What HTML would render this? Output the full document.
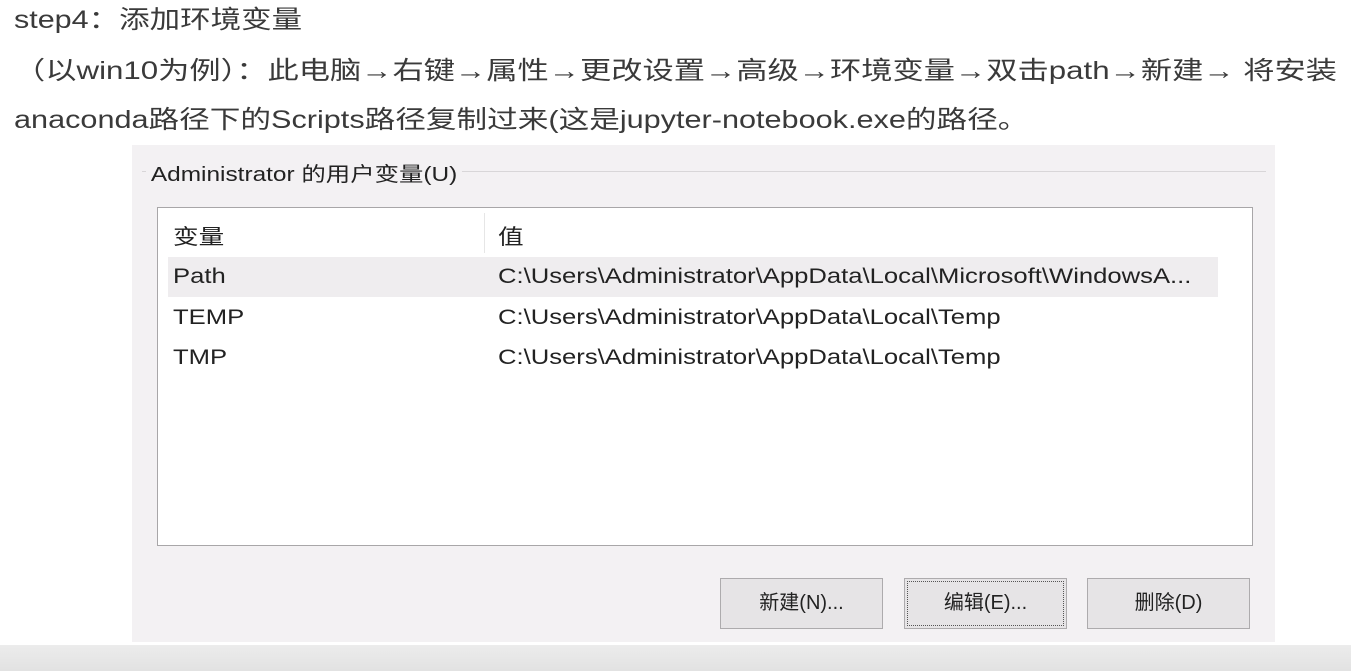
<!DOCTYPE html>
<html><head><meta charset="utf-8"><style>
body{margin:0;width:1351px;height:671px;background:#fff;position:relative;overflow:hidden;font-family:"Liberation Sans","Noto Sans CJK SC",sans-serif;color:#3a3a3a}
.t{position:absolute;left:14px;font-size:25px;white-space:nowrap;line-height:30px;transform-origin:0 50%}
.dlg{position:absolute;left:132px;top:145px;width:1143px;height:497px;background:#f3f1f3}
.gb{position:absolute;left:10px;top:26px;width:1124px;height:460px;border-top:1px solid #d8d6d8}
.gt{position:absolute;left:14px;top:13px;background:#f3f1f3;padding:0 4px;font-size:20px;color:#222;transform:scaleX(1.22);transform-origin:0 50%}
.lb{position:absolute;left:25px;top:62px;width:1094px;height:337px;background:#fff;border:1px solid #a8a6a8}
.r{position:absolute;left:10px;width:1050px;height:40px;font-size:21px;color:#222}
.r span{position:absolute;top:8px;transform:scaleX(1.22);transform-origin:0 50%;white-space:nowrap}
.btn{position:absolute;top:433px;width:163px;height:51px;background:#e6e4e6;border:1px solid #adabad;box-sizing:border-box;font-size:20px;text-align:center;line-height:49px;color:#222}
.foot{position:absolute;left:0;top:645px;width:1351px;height:26px;background:linear-gradient(#ececec,#e2e2e2)}
</style></head><body>
<div class="t" style="top:5px;transform:scaleX(1.22)">step4：添加环境变量</div>
<div class="t" style="top:56px;transform:scaleX(1.25)">（以win10为例）：此电脑→右键→属性→更改设置→高级→环境变量→双击path→新建→ 将安装</div>
<div class="t" style="top:105px;transform:scaleX(1.225)">anaconda路径下的Scripts路径复制过来(这是jupyter-notebook.exe的路径。</div>
<div class="dlg">
<div class="gb"></div>
<div class="gt">Administrator 的用户变量(U)</div>
<div class="lb">
 <div class="r" style="top:5px"><span style="left:5px">变量</span><span style="left:330px">值</span><div style="position:absolute;left:316px;top:0;width:1px;height:40px;background:#e6e6e6"></div></div>
 <div class="r" style="top:49px;background:#efedef"><span style="left:5px">Path</span><span style="left:330px">C:\Users\Administrator\AppData\Local\Microsoft\WindowsA...</span></div>
 <div class="r" style="top:90px"><span style="left:5px">TEMP</span><span style="left:330px">C:\Users\Administrator\AppData\Local\Temp</span></div>
 <div class="r" style="top:130px"><span style="left:5px">TMP</span><span style="left:330px">C:\Users\Administrator\AppData\Local\Temp</span></div>
</div>
<div class="btn" style="left:588px">新建(N)...</div>
<div class="btn" style="left:772px;outline:1px dotted #555;outline-offset:-4px">编辑(E)...</div>
<div class="btn" style="left:955px">删除(D)</div>
</div>
<div class="foot"></div>
</body></html>
